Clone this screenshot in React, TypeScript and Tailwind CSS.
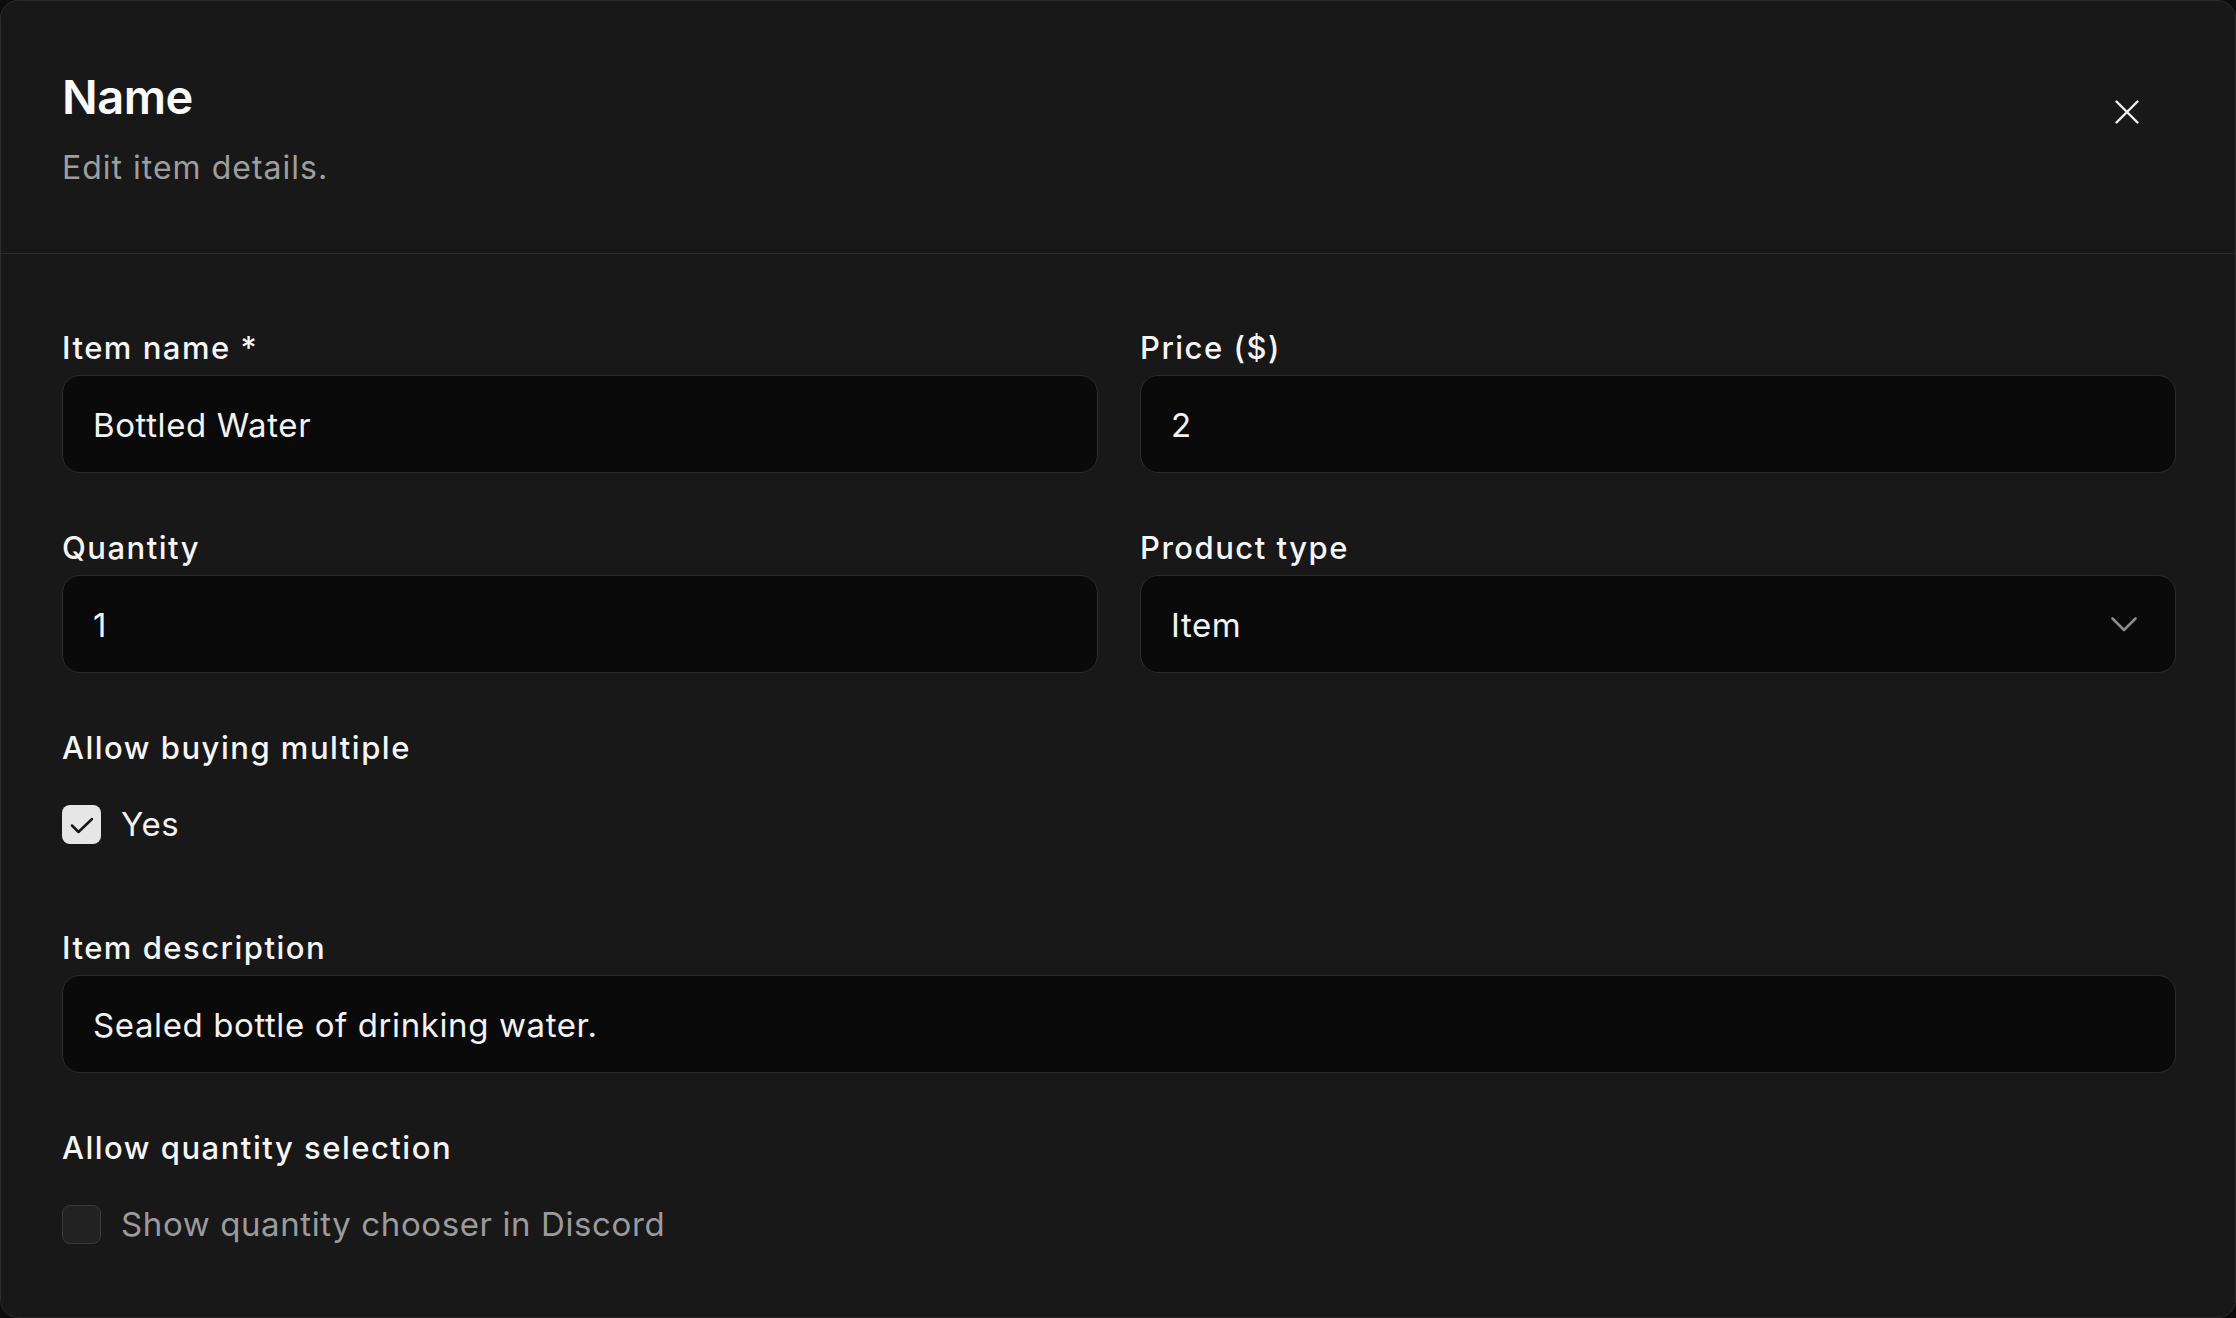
import React from "react";

function Label({ children }: { children: React.ReactNode }) {
  return (
    <div className="text-[31px] leading-[36px] font-medium tracking-[1.5px] text-[#f5f5f5] mb-[9px]">{children}</div>
  );
}

function Input({ value, chevron }: { value: string; chevron?: boolean }) {
  return (
    <div className="h-[98px] rounded-[18px] border border-[#2c2c2c] bg-[#0a0a0a] flex items-center justify-between pl-[30px] pr-[38px]">
      <span className="text-[33px] leading-[40px] tracking-[0.6px] text-[#f2f2f2] mt-[1px]">{value}</span>
      {chevron && (
        <svg width="26" height="15" viewBox="0 0 26 15" fill="none">
          <polyline points="1.5,1.5 13,13 24.5,1.5" stroke="#8c8c8c" strokeWidth="2.6" strokeLinecap="round" strokeLinejoin="round" />
        </svg>
      )}
    </div>
  );
}

function CheckRow({ checked, text }: { checked: boolean; text: string }) {
  return (
    <div className="h-[98px] flex items-center gap-[20px]">
      {checked ? (
        <div className="w-[39px] h-[39px] rounded-[8px] bg-[#e6e6e6] flex items-center justify-center">
          <svg width="24" height="17" viewBox="0 0 24 17" fill="none" className="mt-[3px]">
            <polyline points="2,8.5 8.5,15 22,2" stroke="#161616" strokeWidth="2.5" strokeLinecap="round" strokeLinejoin="round" />
          </svg>
        </div>
      ) : (
        <div className="w-[39px] h-[39px] rounded-[8px] bg-[#222222] border-[1.5px] border-[#3a3a3a]" />
      )}
      <span className={"text-[33px] leading-[40px] tracking-[0.6px] " + (checked ? "text-[#f2f2f2]" : "text-[#9b9b9b]")}>{text}</span>
    </div>
  );
}

export default function App() {
  return (
    <div className="min-h-screen bg-[#0c0c0c]" style={{ fontFamily: "Inter, 'Noto Sans', sans-serif" }}>
      <div className="h-[1318px] rounded-[18px] border border-[#2c2c2c] bg-[#181818] overflow-hidden flex flex-col">
        <div className="flex justify-between border-b border-[#2c2c2c] pl-[61px] pr-[96px] pt-[68px] pb-[65px]">
          <div className="flex flex-col">
            <div className="text-[47px] leading-[56px] font-semibold text-[#fafafa] tracking-[-0.5px]">Name</div>
            <div className="mt-[23px] text-[32px] leading-[40px] tracking-[1px] text-[#9e9e9e]">Edit item details.</div>
          </div>
          <div className="mt-[31px]">
            <svg width="24" height="24" viewBox="0 0 24 24" fill="none">
              <path d="M1.5 1.5 22.5 22.5 M22.5 1.5 1.5 22.5" stroke="#f0f0f0" strokeWidth="2.4" strokeLinecap="round" />
            </svg>
          </div>
        </div>
        <div className="pl-[61px] pr-[59px] pt-[76px] grid grid-cols-2 gap-x-[42px] gap-y-[57px]">
          <div>
            <Label>Item name *</Label>
            <Input value="Bottled Water" />
          </div>
          <div>
            <Label>Price ($)</Label>
            <Input value="2" />
          </div>
          <div>
            <Label>Quantity</Label>
            <Input value="1" />
          </div>
          <div>
            <Label>Product type</Label>
            <Input value="Item" chevron />
          </div>
          <div className="col-span-2">
            <Label>Allow buying multiple</Label>
            <CheckRow checked text="Yes" />
          </div>
          <div className="col-span-2">
            <Label>Item description</Label>
            <Input value="Sealed bottle of drinking water." />
          </div>
          <div className="col-span-2">
            <Label>Allow quantity selection</Label>
            <CheckRow checked={false} text="Show quantity chooser in Discord" />
          </div>
        </div>
      </div>
    </div>
  );
}
